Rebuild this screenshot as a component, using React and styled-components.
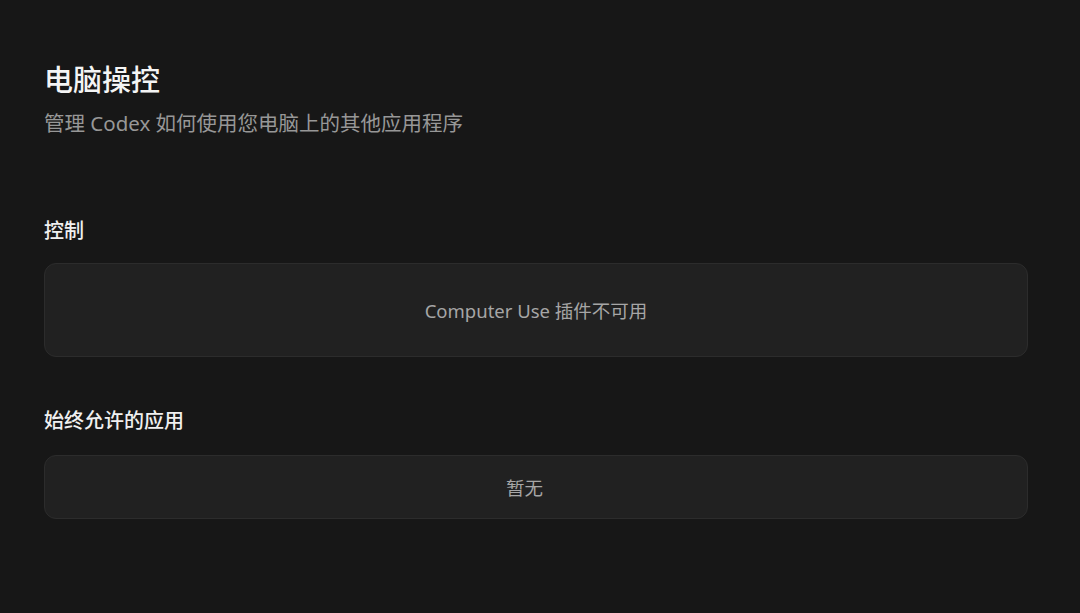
import React from 'react';
import styled, { createGlobalStyle } from 'styled-components';

const GlobalStyle = createGlobalStyle`
  html, body {
    margin: 0;
    padding: 0;
    background: #171717;
  }
  body {
    font-family: "Noto Sans", "Noto Sans CJK SC", sans-serif;
    color: #f2f2f2;
  }
`;

const Page = styled.main`
  box-sizing: border-box;
  width: 1080px;
  height: 613px;
  padding: 62px 52px 0 44px;
  background: #171717;
`;

const Title = styled.h1`
  margin: 0;
  font-size: 29px;
  line-height: 36px;
  font-weight: 500;
  color: #f4f4f4;
`;

const Subtitle = styled.p`
  margin: 11px 0 0;
  font-size: 20.5px;
  line-height: 28px;
  color: #979797;
`;

const Section = styled.section`
  margin-top: ${({ $gap }) => $gap}px;
  display: flex;
  flex-direction: column;
  gap: ${({ $inner }) => $inner}px;
`;

const SectionLabel = styled.h2`
  margin: 0;
  font-size: 20px;
  line-height: 28px;
  font-weight: 500;
  color: #f0f0f0;
`;

const EmptyCard = styled.div`
  box-sizing: border-box;
  height: ${({ $height }) => $height}px;
  display: flex;
  align-items: center;
  justify-content: center;
  padding-right: ${({ $shift = 0 }) => $shift}px;
  background: #212121;
  border: 1px solid #2c2c2c;
  border-radius: 12px;
  font-size: 18.5px;
  color: #a6a6a6;
`;

export default function App() {
  return (
    <>
      <GlobalStyle />
      <Page>
        <Title>电脑操控</Title>
        <Subtitle>管理 Codex 如何使用您电脑上的其他应用程序</Subtitle>

        <Section $gap={80} $inner={18}>
          <SectionLabel>控制</SectionLabel>
          <EmptyCard $height={94}>Computer Use 插件不可用</EmptyCard>
        </Section>

        <Section $gap={50} $inner={20}>
          <SectionLabel>始终允许的应用</SectionLabel>
          <EmptyCard $height={64} $shift={23}>暂无</EmptyCard>
        </Section>
      </Page>
    </>
  );
}
